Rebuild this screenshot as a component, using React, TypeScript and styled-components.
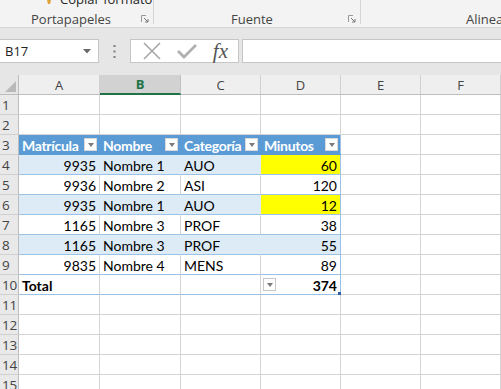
import React from 'react';
import styled, { createGlobalStyle } from 'styled-components';

const GlobalStyle = createGlobalStyle`
  html, body {
    margin: 0;
    padding: 0;
    background: #ffffff;
    overflow: hidden;
  }
`;

const Window = styled.div`
  width: 501px;
  height: 389px;
  overflow: hidden;
  display: flex;
  flex-direction: column;
  background: #ffffff;
`;

/* ---------- ribbon ---------- */

const Ribbon = styled.div`
  height: 27px;
  flex: none;
  display: flex;
  background: #f3f3f3;
  border-bottom: 1px solid #d4d4d4;
  overflow: hidden;
`;

const Group = styled.div<{ $w: number }>`
  width: ${p => p.$w}px;
  flex: none;
  height: 27px;
  display: flex;
  flex-direction: column;
  position: relative;
  &::after {
    content: '';
    position: absolute;
    right: 0;
    top: 0;
    height: 24px;
    border-right: 1px solid #d6d6d6;
  }
`;

const GroupTop = styled.div`
  height: 11px;
  flex: none;
  overflow: hidden;
  display: flex;
  align-items: flex-start;
  gap: 6px;
  padding-left: 44px;
`;

const TopText = styled.span`
  font-family: 'Open Sans', 'Noto Sans', sans-serif;
  font-size: 13px;
  line-height: 16px;
  color: #262626;
  margin-top: -9px;
`;

const GroupLabel = styled.div<{ $pad: number }>`
  height: 16px;
  flex: none;
  display: flex;
  align-items: center;
  padding-left: ${p => p.$pad}px;
  line-height: 16px;
  position: relative;
  font-family: 'Open Sans', 'Noto Sans', sans-serif;
  font-size: 13px;
  color: #444444;
  white-space: nowrap;
`;

const Launcher = styled.svg`
  position: absolute;
  right: 5px;
  bottom: 4px;
`;

/* ---------- formula bar ---------- */

const FormulaArea = styled.div`
  height: 47px;
  flex: none;
  display: flex;
  align-items: flex-start;
  padding-top: 11px;
  box-sizing: border-box;
  background: #e6e6e6;
`;

const NameBox = styled.div`
  width: 100px;
  height: 24px;
  margin-left: -1px;
  box-sizing: border-box;
  background: #ffffff;
  border: 1px solid #c6c6c6;
  display: flex;
  align-items: center;
  justify-content: space-between;
  padding: 0 7px 0 5px;
  font-family: 'Open Sans', 'Noto Sans', sans-serif;
  font-size: 13px;
  color: #222222;
`;

const Dots = styled.div`
  width: 31px;
  height: 24px;
  display: flex;
  align-items: center;
  justify-content: center;
`;

const FxButtons = styled.div`
  width: 109px;
  height: 24px;
  box-sizing: border-box;
  background: #ffffff;
  border: 1px solid #c6c6c6;
  display: flex;
  align-items: center;
  justify-content: space-around;
  padding: 0 2px 0 4px;
`;

const Fx = styled.span`
  font-family: 'Liberation Serif', 'DejaVu Serif', serif;
  font-style: italic;
  font-size: 21px;
  color: #555555;
  line-height: 20px;
`;

const FormulaInput = styled.div`
  flex: 1;
  height: 24px;
  margin-left: 3px;
  box-sizing: border-box;
  background: #ffffff;
  border: 1px solid #c6c6c6;
  border-right: none;
`;

/* ---------- grid ---------- */

const Sheet = styled.div`
  flex: 1;
  display: grid;
  grid-template-columns: 19px 81px 81px 80px 80px 80px 80px 1fr;
  grid-auto-rows: 20px;
  font-family: 'Lato', 'Liberation Sans', sans-serif;
  font-size: 14px;
  color: #000000;
`;

const Corner = styled.div`
  background: #e6e6e6;
  border-right: 1px solid #bdbdbd;
  border-bottom: 1px solid #bdbdbd;
  box-sizing: border-box;
  position: relative;
  &::after {
    content: '';
    position: absolute;
    right: 2px;
    bottom: 2px;
    border-left: 11px solid transparent;
    border-bottom: 11px solid #b9b9b9;
  }
`;

const ColHead = styled.div<{ $active?: boolean }>`
  box-sizing: border-box;
  display: flex;
  align-items: center;
  justify-content: center;
  font-family: 'Open Sans', 'Noto Sans', sans-serif;
  font-size: 13px;
  background: ${p => (p.$active ? '#d2d2d2' : '#efefef')};
  color: ${p => (p.$active ? '#217346' : '#444444')};
  font-weight: ${p => (p.$active ? 700 : 400)};
  border-right: 1px solid ${p => (p.$active ? '#c0c0c0' : '#d0d0d0')};
  border-bottom: ${p => (p.$active ? '2px solid #217346' : '1px solid #bdbdbd')};
`;

const RowHead = styled.div`
  box-sizing: border-box;
  display: flex;
  align-items: center;
  padding-left: 2px;
  font-family: 'Open Sans', 'Noto Sans', sans-serif;
  font-size: 13.5px;
  letter-spacing: -0.3px;
  color: #444444;
  background: #e9e9e9;
  border-right: 1px solid #bdbdbd;
  border-bottom: 1px solid #d0d0d0;
  overflow: hidden;
`;

type Kind = 'empty' | 'head' | 'band' | 'plain' | 'total';

const bgFor = (k: Kind, yellow?: boolean) => {
  if (yellow) return '#ffff00';
  if (k === 'head') return '#5b9bd5';
  if (k === 'band') return '#ddebf7';
  return '#ffffff';
};

const Cell = styled.div<{ $kind: Kind; $right?: boolean; $edge?: boolean; $yellow?: boolean }>`
  box-sizing: border-box;
  position: relative;
  display: flex;
  align-items: center;
  justify-content: ${p => (p.$right ? 'flex-end' : 'flex-start')};
  padding: 1px 3px 0 3px;
  white-space: nowrap;
  overflow: visible;
  background: ${p => bgFor(p.$kind, p.$yellow)};
  color: ${p => (p.$kind === 'head' ? '#ffffff' : '#000000')};
  font-weight: ${p => (p.$kind === 'head' || p.$kind === 'total' ? 700 : 400)};
  letter-spacing: ${p => (p.$kind === 'head' ? '-0.3px' : 'normal')};
  border-right: 1px solid
    ${p =>
      p.$edge && p.$kind !== 'empty'
        ? '#9bc2e6'
        : p.$kind === 'head'
        ? '#5b9bd5'
        : p.$kind === 'band'
        ? p.$yellow ? '#ffff00' : '#ddebf7'
        : '#d4d4d4'};
  border-bottom: 1px solid ${p => (p.$kind === 'empty' ? '#d4d4d4' : p.$kind === 'head' ? '#5b9bd5' : '#9bc2e6')};
  ${p => p.$kind === 'total' && 'border-top: 1px solid #9bc2e6; margin-top: -1px;'}
`;

const Filter = styled.span<{ $left?: boolean }>`
  position: absolute;
  top: 3px;
  ${p => (p.$left ? 'left: 2px;' : 'right: 2px;')}
  width: 13px;
  height: 13px;
  box-sizing: border-box;
  background: #ffffff;
  border: 1px solid ${p => (p.$left ? '#c8c8c8' : '#d9d9d9')};
  display: flex;
  align-items: center;
  justify-content: center;
  &::after {
    content: '';
    border-left: 3.5px solid transparent;
    border-right: 3.5px solid transparent;
    border-top: 4px solid #7a7a7a;
    margin-top: 1px;
  }
`;

const Handle = styled.span`
  position: absolute;
  right: -1px;
  bottom: -1px;
  width: 3px;
  height: 3px;
  background: #2f5fa8;
`;

type Row = { a?: string; b?: string; c?: string; d?: string; yellow?: boolean };

const header = ['Matrícula', 'Nombre', 'Categoría', 'Minutos'];

const data: Row[] = [
  { a: '9935', b: 'Nombre 1', c: 'AUO', d: '60', yellow: true },
  { a: '9936', b: 'Nombre 2', c: 'ASI', d: '120' },
  { a: '9935', b: 'Nombre 1', c: 'AUO', d: '12', yellow: true },
  { a: '1165', b: 'Nombre 3', c: 'PROF', d: '38' },
  { a: '1165', b: 'Nombre 3', c: 'PROF', d: '55' },
  { a: '9835', b: 'Nombre 4', c: 'MENS', d: '89' },
];

const letters = ['A', 'B', 'C', 'D', 'E', 'F', ''];

const EmptyRest = () => (
  <>
    <Cell $kind="empty" />
    <Cell $kind="empty" />
    <Cell $kind="empty" />
  </>
);

const EmptyRow = ({ n }: { n: number }) => (
  <>
    <RowHead>{n}</RowHead>
    <Cell $kind="empty" />
    <Cell $kind="empty" />
    <Cell $kind="empty" />
    <Cell $kind="empty" />
    <EmptyRest />
  </>
);

const LauncherIcon = () => (
  <Launcher width="8" height="8" viewBox="0 0 8 8">
    <path d="M0.5 0.5 H5 M0.5 0.5 V7" stroke="#999" fill="none" />
    <path d="M3 3 L7 7 M7 4 V7 H4" stroke="#777" fill="none" />
  </Launcher>
);

const App = () => {
  return (
    <Window>
      <GlobalStyle />
      <Ribbon>
        <Group $w={154}>
          <GroupTop>
            <svg width="10" height="6" viewBox="0 0 10 6">
              <path d="M3 0 L7 0 L6 4 L4 4 Z" fill="#e0a33a" />
            </svg>
            <TopText>Copiar formato</TopText>
          </GroupTop>
          <GroupLabel $pad={31}>
            Portapapeles
            <LauncherIcon />
          </GroupLabel>
        </Group>
        <Group $w={207}>
          <GroupTop />
          <GroupLabel $pad={77}>
            Fuente
            <LauncherIcon />
          </GroupLabel>
        </Group>
        <Group $w={210}>
          <GroupTop />
          <GroupLabel $pad={105}>Alineación</GroupLabel>
        </Group>
      </Ribbon>

      <FormulaArea>
        <NameBox>
          B17
          <svg width="8" height="5" viewBox="0 0 8 5">
            <path d="M0 0 H8 L4 4.5 Z" fill="#6a6a6a" />
          </svg>
        </NameBox>
        <Dots>
          <svg width="3" height="13" viewBox="0 0 3 13">
            <rect x="0.5" y="0" width="2" height="2" fill="#7a7a7a" />
            <rect x="0.5" y="5.5" width="2" height="2" fill="#7a7a7a" />
            <rect x="0.5" y="11" width="2" height="2" fill="#7a7a7a" />
          </svg>
        </Dots>
        <FxButtons>
          <svg width="18" height="18" viewBox="0 0 18 18">
            <path d="M1 1 L17 17 M17 1 L1 17" stroke="#a6a6a6" strokeWidth="1.6" />
          </svg>
          <svg width="20" height="16" viewBox="0 0 20 16">
            <path d="M1 8 L7 14 L19 2" stroke="#b0b0b0" strokeWidth="2.8" fill="none" />
          </svg>
          <Fx>fx</Fx>
        </FxButtons>
        <FormulaInput />
      </FormulaArea>

      <Sheet>
        <Corner />
        {letters.map((l, i) => (
          <ColHead key={i} $active={l === 'B'}>
            {l}
          </ColHead>
        ))}

        <EmptyRow n={1} />
        <EmptyRow n={2} />

        <RowHead>3</RowHead>
        {header.map((h, i) => (
          <Cell key={h} $kind="head" $edge={i === 3}>
            {h}
            <Filter />
          </Cell>
        ))}
        <EmptyRest />

        {data.map((r, i) => {
          const kind: Kind = i % 2 === 0 ? 'band' : 'plain';
          return (
            <React.Fragment key={i}>
              <RowHead>{i + 4}</RowHead>
              <Cell $kind={kind} $right>{r.a}</Cell>
              <Cell $kind={kind}>{r.b}</Cell>
              <Cell $kind={kind}>{r.c}</Cell>
              <Cell $kind={kind} $right $edge $yellow={r.yellow}>{r.d}</Cell>
              <EmptyRest />
            </React.Fragment>
          );
        })}

        <RowHead>10</RowHead>
        <Cell $kind="total">Total</Cell>
        <Cell $kind="total" />
        <Cell $kind="total" />
        <Cell $kind="total" $right $edge>
          <Filter $left />
          374
          <Handle />
        </Cell>
        <EmptyRest />

        {[11, 12, 13, 14, 15].map(n => (
          <EmptyRow key={n} n={n} />
        ))}
      </Sheet>
    </Window>
  );
};

export default App;
